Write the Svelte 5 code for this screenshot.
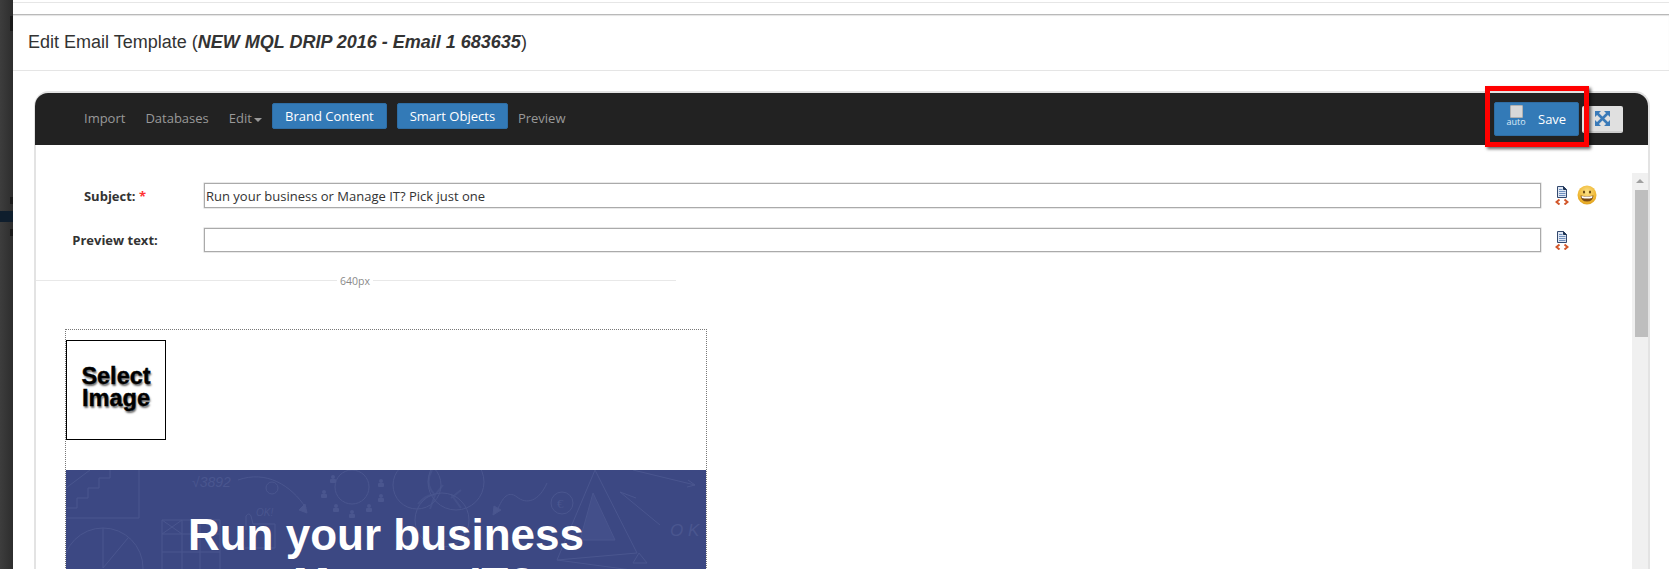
<script>
// persons scattered round the circle in the banner doodle
const people = [[267,7],[258,22],[270,36],[286,42],[303,36],[315,26],[315,11]]
const subject = 'Run your business or Manage IT? Pick just one'
</script>

{#snippet docIcon()}
	<svg class="doc" width="14" height="19" viewBox="0 0 14 19">
		<path d="M2.500 .5h6l3 3v8h-9z" fill="#dfe7f3" stroke="#33496e"/>
		<path d="M8.500 .5v3h3" fill="#1f3554" stroke="#1f3554"/>
		<path d="M4 3.500h3.500M4 5.500h6.500M4 7.500h6.500M4 9.500h6.500" stroke="#6f8fbd"/>
		<path d="M4.500 13.500l-3 2.500 3 2.500M9.500 13.500l3 2.500-3 2.500" fill="none" stroke="#d2562a" stroke-width="2"/>
	</svg>
{/snippet}

<div class="page">
	<div class="backdrop">
		<i class="spot one"></i>
		<i class="band"></i>
		<i class="spot two"></i>
		<i class="spot three"></i>
	</div>

	<div class="main">
		<div class="strip"></div>

		<header class="head">
			<h1>Edit Email Template (<em>NEW MQL DRIP 2016 - Email 1 683635</em>)</h1>
		</header>

		<div class="wrap">
			<div class="editor">
				<nav class="toolbar">
					<span class="link">Import</span>
					<span class="link">Databases</span>
					<span class="link edit">Edit<b class="caret"></b></span>
					<span class="btn brand">Brand Content</span>
					<span class="btn smart">Smart Objects</span>
					<span class="link preview">Preview</span>

					<div class="save">
						<span class="auto"><i></i><small>auto</small></span>
						<span>Save</span>
						<div class="redbox"></div>
					</div>
					<span class="full">
						<svg width="15" height="15" viewBox="0 0 15 15" fill="#3a7ab8" stroke="none">
							<path d="M0 0h6L0 6zM15 0v6L9 0zM0 15V9l6 6zM15 15H9l6-6z"/>
							<path d="M2.500 2.500l10 10M12.500 2.500l-10 10" stroke="#3a7ab8" stroke-width="2.600"/>
						</svg>
					</span>
				</nav>

				<div class="content">
					<div class="form">
						<div class="row first">
							<label for="subj">Subject: <span class="req">*</span></label>
							<input id="subj" value={subject} />
							{@render docIcon()}
							<svg class="smile" width="20" height="20" viewBox="0 0 20 20">
								<defs>
									<radialGradient id="sm" cx=".5" cy=".35" r=".7">
										<stop offset="0" stop-color="#fbe28a"/>
										<stop offset=".7" stop-color="#efb52f"/>
										<stop offset="1" stop-color="#d89a1c"/>
									</radialGradient>
								</defs>
								<circle cx="10" cy="10" r="9.500" fill="url(#sm)"/>
								<ellipse cx="7" cy="7" rx="1.100" ry="1.500" fill="#6b4a12"/>
								<ellipse cx="13" cy="7" rx="1.100" ry="1.500" fill="#6b4a12"/>
								<path d="M3.500 10.500q6.500 1.500 13 0q-.5 6-6.500 6t-6.500-6z" fill="#7a4a14"/>
								<path d="M4.500 11q5.500 1.200 11 0l-.4 2q-5.100 1-10.200 0z" fill="#fff"/>
							</svg>
						</div>
						<div class="row second">
							<label for="prev">Preview text:</label>
							<input id="prev" />
							{@render docIcon()}
						</div>

						<div class="ruler"><span>640px</span></div>

						<div class="email">
							<div class="select"><span>Select<br />Image</span></div>
							<div class="banner">
								<svg class="doodle" width="640" height="110" viewBox="0 0 640 110" fill="none" stroke="#4a568f" stroke-width="1">
									<path d="M0 38H11V28H22V18H33V8H44V0M0 18L24 0M73 0V48H0"/>
									<text x="126" y="17" font-size="14" font-style="italic" font-family="Liberation Sans, sans-serif" fill="#4a568f" stroke="none">√3892</text>
									<path d="M172 10C200 0 225 15 240 38"/>
									<path d="M241 43l-8-3 6-6z" fill="#4a568f"/>
									<circle cx="206" cy="18" r="6"/>
									<circle cx="286" cy="17" r="17"/>
									{#each people as p}
										<g fill="#4a568f" stroke="none">
											<circle cx={p[0]} cy={p[1]} r="2"/>
											<rect x={p[0]-3} y={p[1]+2} width="6" height="4" rx="1"/>
										</g>
									{/each}
									<text x="190" y="46" font-size="10" font-style="italic" font-family="Liberation Sans, sans-serif" fill="#4a568f" stroke="none">OK!</text>
									<path d="M180 60V46q3-4 5 0l2 8h22v24h-30M96 50H154V110M96 50V110M96 64H154M96 82H154M116 50V110M134 50V110M96 50L116 64M116 50L96 64"/>
									<circle cx="37" cy="98" r="40"/>
									<path d="M37 58V98L62 68"/>
									<circle cx="351" cy="15" r="24"/>
									<circle cx="390" cy="12" r="28"/>
									<circle cx="376" cy="50" r="27"/>
									<path d="M366 0q-8 14 3 25l8-10M352 34q8-10 17-9l-5 14M385 24l10 14M395 20l-10 8" stroke-width="2" opacity=".6"/>
									<path d="M481 13c-8 18-20 22-30 14s-16 4-20 14"/>
									<path d="M427 45l1-9 7 4z" fill="#4a568f"/>
									<circle cx="496" cy="33" r="11"/>
									<text x="491" y="38" font-size="13" fill="#4a568f" stroke="none" font-family="Liberation Serif, serif">€</text>
									<path d="M529 0L491 90L571 83L529 0M491 90L640 110"/>
									<path d="M527 23L514 70H549Z" fill="#434f8a"/>
									<path d="M567 0L629 15M622 10l7 5-8 2M554 22L594 55M554 22l16 6M573 83l-6 10h14z"/>
									<text x="604" y="66" font-size="17" font-style="italic" font-family="Liberation Sans, sans-serif" fill="#4a568f" stroke="none">O K</text>
								</svg>
								<h2>Run your business<br />or Manage IT?</h2>
							</div>
						</div>
					</div>

					<div class="scroll">
						<b class="up"></b>
						<div class="thumb"></div>
					</div>
				</div>
			</div>
		</div>
	</div>
</div>

<style>
	:global(body) {
		margin: 0;
		background: #fff;
	}

	.page {
		display: flex;
		height: 569px;
		overflow: hidden;
		font-family: "Open Sans", sans-serif;
	}

	.backdrop {
		position: relative;
		width: 13px;
		flex: none;
		background: linear-gradient(90deg, #3d3d3d, #2d2d2d);
	}
	.backdrop i {
		position: absolute;
		display: block;
	}
	.band {
		top: 211px;
		left: 0;
		width: 13px;
		height: 11px;
		background: #0f1e2d;
	}
	.spot {
		left: 10px;
		width: 3px;
		background: #1a1a1a;
	}
	.one { top: 16px; height: 15px; }
	.two { top: 197px; height: 7px; }
	.three { top: 229px; height: 7px; }

	.main {
		flex: 1;
		min-width: 0;
		display: flex;
		flex-direction: column;
	}

	.strip {
		height: 14px;
		box-sizing: border-box;
		position: relative;
		background: linear-gradient(#fff 2px, #e6e6e6 2px, #e6e6e6 3px, #fff 3px);
	}

	.head {
		height: 57px;
		flex: none;
		box-sizing: border-box;
		border-top: 1px solid #b9b9b9;
		border-bottom: 1px solid #e5e5e5;
		box-shadow: inset 0 1px 1px #e4e4e4;
		padding-left: 15px;
		display: flex;
		align-items: center;
	}
	h1 {
		margin: 0;
		font: 400 18px "Liberation Sans", Arial, sans-serif;
		color: #333;
	}
	h1 em {
		font-weight: 700;
	}

	.wrap {
		padding: 20px 19px 0 21px;
		flex: 1;
		min-height: 0;
	}
	.editor {
		height: 100%;
		box-sizing: border-box;
		border: 2px solid #e3e3e3;
		border-bottom: 0;
		border-radius: 15px 15px 0 0;
		display: flex;
		flex-direction: column;
	}

	.toolbar {
		height: 52px;
		flex: none;
		background: #222;
		border-radius: 13px 13px 0 0;
		display: flex;
		align-items: center;
		padding: 0 25px 0 49px;
		font-size: 13px;
		margin-left: -1px;
	}
	.link {
		color: #999;
		margin-right: 20px;
		white-space: nowrap;
		position: relative;
		top: -1px;
	}
	.edit {
		margin-right: 10px;
	}
	.caret {
		display: inline-block;
		margin-left: 2px;
		vertical-align: middle;
		border: 4px solid transparent;
		border-top-color: #999;
		border-bottom: 0;
	}
	.btn {
		background: #337ab7;
		border: 1px solid #2e6da4;
		border-radius: 2px;
		color: #fff;
		height: 26px;
		box-sizing: border-box;
		display: flex;
		align-items: center;
		justify-content: center;
		margin: 0 10px 6px 0;
	}
	.brand { width: 115px; }
	.smart { width: 111px; }

	.save {
		position: relative;
		margin-left: auto;
		width: 85px;
		height: 34px;
		box-sizing: border-box;
		background: #337ab7;
		border: 1px solid #2e6da4;
		border-radius: 2px;
		color: #fff;
		display: flex;
		align-items: center;
		padding-left: 12px;
		gap: 13px;
	}
	.auto {
		display: flex;
		flex-direction: column;
		align-items: center;
		width: 18px;
		margin-top: -9px;
	}
	.auto i {
		width: 13px;
		height: 13px;
		box-sizing: border-box;
		background: #d8d8d8;
		border: 1px solid #b0b0b0;
		border-radius: 1px;
	}
	.auto small {
		font-size: 9px;
		line-height: 7px;
		color: #dcebf7;
	}
	.redbox {
		position: absolute;
		inset: -17px -11px -12px -10px;
		border: 5px solid #f00;
		box-shadow: 2px 2px 3px rgba(0, 0, 0, .6);
	}
	.full {
		width: 41px;
		height: 27px;
		margin-left: 3px;
		box-sizing: border-box;
		background: #e0e0e0;
		border-bottom: 2px solid #ccc;
		border-radius: 2px;
		display: flex;
		align-items: center;
		justify-content: center;
	}

	.content {
		flex: 1;
		min-height: 0;
		display: flex;
	}
	.form {
		flex: 1;
		min-width: 0;
		padding-top: 38px;
	}

	.row {
		display: flex;
		align-items: center;
		color: #333;
	}
	.row.first { height: 25px; margin-bottom: 20px; }
	.row.second { height: 24px; }
	label {
		width: 158px;
		text-align: center;
		font-size: 13px;
		font-weight: 700;
		color: #333;
		margin-right: 10px;
		flex: none;
	}
	.req { color: #f33; }
	input {
		width: 1337px;
		height: 100%;
		box-sizing: border-box;
		flex: none;
		border: 1px solid #aaa;
		padding: 0 1px;
		font: 13px "Open Sans", sans-serif;
		color: #333;
		outline: none;
		border-radius: 0;
		box-shadow: 0 0 0 .5px #d4d4d4;
	}
	.doc {
		margin-left: 14px;
		flex: none;
	}
	.smile {
		margin-left: 8px;
		flex: none;
		margin-top: -2px;
	}

	.ruler {
		margin-top: 28px;
		width: 640px;
		height: 1px;
		background: #e8e8e8;
		display: flex;
		justify-content: center;
		align-items: center;
	}
	.ruler span {
		background: #fff;
		padding: 0 3px;
		font-size: 10.5px;
		color: #8a8a8a;
		margin-left: -2px;
		margin-top: 1px;
	}

	.email {
		margin: 48px 0 0 29px;
		width: 642px;
		box-sizing: border-box;
		border: 1px dotted #777;
		border-bottom: 0;
		padding-top: 10px;
	}
	.select {
		width: 100px;
		height: 100px;
		box-sizing: border-box;
		border: 1.500px solid #000;
		display: flex;
		align-items: center;
		justify-content: center;
		margin-bottom: 30px;
		font: 700 23.500px/22px "Liberation Sans", Arial, sans-serif;
		text-align: center;
		color: #000;
		text-shadow: 1px 2px 2px rgba(0, 0, 0, .6);
		padding-bottom: 6px;
		-webkit-text-stroke: .4px #000;
	}

	.banner {
		position: relative;
		background: #3c4883;
		height: 200px;
		padding-top: 40px;
		box-sizing: border-box;
	}
	.doodle {
		position: absolute;
		top: 0;
		left: 0;
	}
	h2 {
		position: relative;
		margin: 0;
		font: 700 44px/49px "Liberation Sans", Arial, sans-serif;
		color: #fff;
		text-align: center;
	}

	.scroll {
		width: 16px;
		flex: none;
		margin-top: 28px;
		background: #f0f0f0;
		display: flex;
		flex-direction: column;
		align-items: flex-end;
	}
	.up {
		align-self: center;
		margin: 6px 0 7px;
		border: 4px solid transparent;
		border-bottom: 4px solid #a0a0a0;
		border-top: 0;
	}
	.thumb {
		width: 13px;
		height: 147px;
		background: #bebebe;
	}
</style>
